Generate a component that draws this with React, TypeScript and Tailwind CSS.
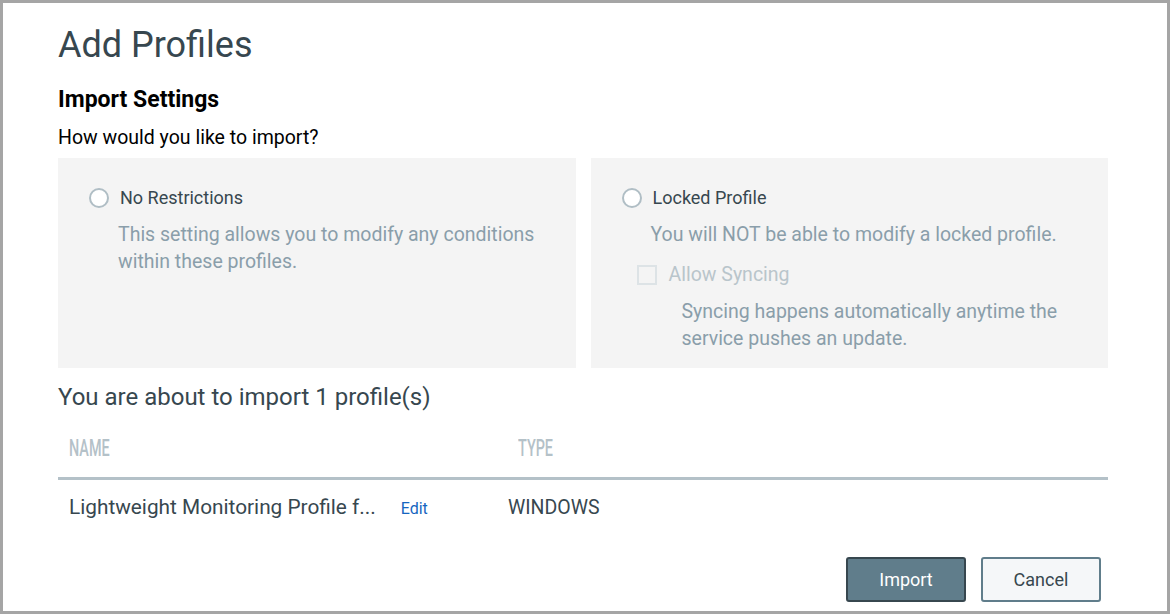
import React from 'react'

function Radio() {
  return <span className="inline-block w-[20px] h-[20px] rounded-full border-2 border-[#b0bec5] bg-white shrink-0" />
}

export default function App() {
  return (
    <div className="w-[1170px] h-[614px] border-[3px] border-[#a5a5a5] bg-white font-['Roboto',sans-serif] overflow-hidden">
      <div className="pl-[55px] pr-[59px] pt-[22px]">
        <h1 className="text-[36px] leading-[40px] text-[#37474f]">Add Profiles</h1>

        <h2 className="mt-[21px] text-[23px] leading-[28px] font-bold text-black">Import Settings</h2>
        <p className="mt-[11px] text-[19.5px] leading-[26px] text-black">How would you like to import?</p>

        <div className="mt-[7px] grid grid-cols-2 gap-[15px]">
          <div className="bg-[#f4f4f4] h-[210px] pl-[31px] pr-4 pt-[29px]">
            <div className="flex items-center gap-[11px]">
              <Radio />
              <span className="text-[18px] leading-[22px] text-[#37474f]">No Restrictions</span>
            </div>
            <p className="mt-[12px] pl-[29px] text-[19.5px] leading-[27px] text-[#8a9eaa]">
              This setting allows you to modify any conditions within these profiles.
            </p>
          </div>
          <div className="bg-[#f4f4f4] h-[210px] pl-[31px] pr-4 pt-[29px]">
            <div className="flex items-center gap-[11px]">
              <Radio />
              <span className="text-[18px] leading-[22px] text-[#37474f]">Locked Profile</span>
            </div>
            <p className="mt-[12px] pl-[29px] text-[19.5px] leading-[27px] text-[#8a9eaa]">
              You will NOT be able to modify a locked profile.
            </p>
            <div className="mt-[13px] pl-[15px] flex items-center gap-[12px]">
              <span className="inline-block w-[20px] h-[20px] border-2 border-[#dde3e6] bg-[#f4f4f4]" />
              <span className="text-[19.5px] leading-[27px] text-[#b9c5cb]">Allow Syncing</span>
            </div>
            <p className="mt-[10px] pl-[60px] pr-[20px] text-[19.5px] leading-[27px] text-[#8a9eaa]">
              Syncing happens automatically anytime the service pushes an update.
            </p>
          </div>
        </div>

        <p className="mt-[14px] text-[24px] leading-[30px] text-[#37474f]">You are about to import 1 profile(s)</p>

        <div className="flex h-[68px] items-start border-b-[3px] border-[#b4c1c8] pt-[22px]">
          <span className="w-[460px] pl-[11px] leading-[28px]">
            <span className="inline-block origin-left scale-x-[0.6] text-[24px] font-medium text-[#b4c1c8]">NAME</span>
          </span>
          <span className="inline-block origin-left scale-x-[0.6] text-[24px] leading-[28px] font-medium text-[#b4c1c8]">TYPE</span>
        </div>

        <div className="flex items-center h-[56px]">
          <span className="w-[450px] pl-[11px] flex items-center">
            <span className="text-[20.8px] text-[#37474f]">Lightweight Monitoring Profile f...</span>
            <span className="ml-[25px] text-[16px] text-[#1565c0] mt-[2px]">Edit</span>
          </span>
          <span className="text-[19.5px] text-[#37474f]">WINDOWS</span>
        </div>

        <div className="mt-[21px] flex justify-end gap-[15px] pr-[7px]">
          <button className="w-[120px] h-[45px] rounded-[3px] border-2 border-[#37474f] bg-[#607d8b] text-[18px] text-white">Import</button>
          <button className="w-[120px] h-[45px] rounded-[3px] border-2 border-[#607d8b] bg-[#f5f7f9] text-[18px] text-[#37474f]">Cancel</button>
        </div>
      </div>
    </div>
  )
}
